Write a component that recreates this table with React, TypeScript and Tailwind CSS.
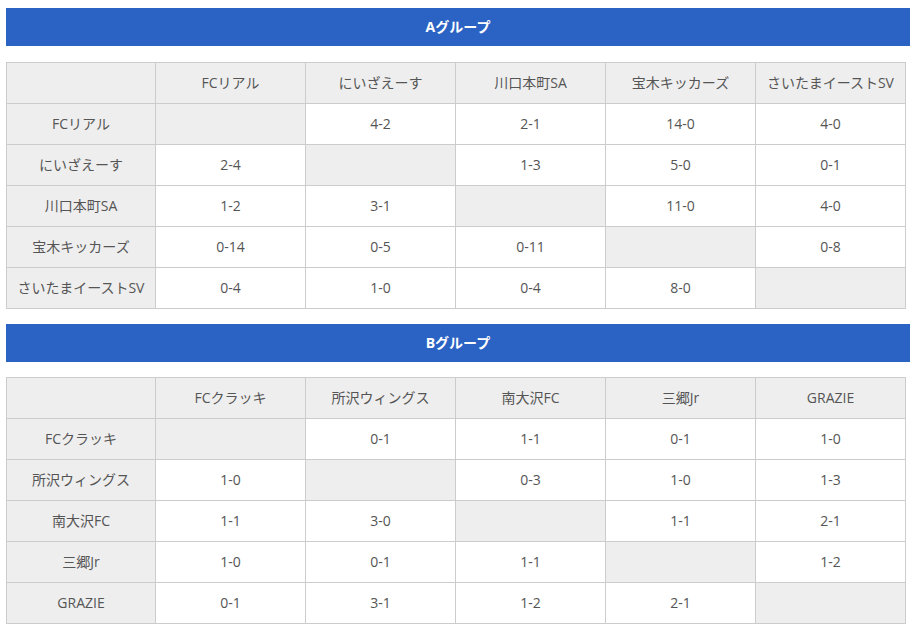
import React from "react";

type Group = { title: string; teams: string[]; scores: (string | null)[][] };

const groups: Group[] = [
  {
    title: "Aグループ",
    teams: ["FCリアル", "にいざえーす", "川口本町SA", "宝木キッカーズ", "さいたまイーストSV"],
    scores: [
      [null, "4-2", "2-1", "14-0", "4-0"],
      ["2-4", null, "1-3", "5-0", "0-1"],
      ["1-2", "3-1", null, "11-0", "4-0"],
      ["0-14", "0-5", "0-11", null, "0-8"],
      ["0-4", "1-0", "0-4", "8-0", null],
    ],
  },
  {
    title: "Bグループ",
    teams: ["FCクラッキ", "所沢ウィングス", "南大沢FC", "三郷Jr", "GRAZIE"],
    scores: [
      [null, "0-1", "1-1", "0-1", "1-0"],
      ["1-0", null, "0-3", "1-0", "1-3"],
      ["1-1", "3-0", null, "1-1", "2-1"],
      ["1-0", "0-1", "1-1", null, "1-2"],
      ["0-1", "3-1", "1-2", "2-1", null],
    ],
  },
];

function Cell({ gray, children }: { gray?: boolean; children?: React.ReactNode }) {
  return (
    <div
      className={
        "h-[41px] pb-[2px] border-r border-b border-[#cccccc] flex items-center justify-center whitespace-nowrap " +
        (gray ? "bg-[#eeeeee]" : "bg-white")
      }
    >
      {children}
    </div>
  );
}

function GroupTable({ g, first }: { g: Group; first: boolean }) {
  return (
    <div className={first ? "pt-2" : "pt-[15px]"}>
      <div className="h-[38px] pb-[2px] bg-[#2b63c4] text-white font-bold text-[14px] flex items-center justify-center">
        {g.title}
      </div>
      <div
        className={
          (first ? "mt-4" : "mt-[15px]") +
          " w-[900px] grid grid-cols-[149px_150px_150px_150px_150px_150px] border-l border-t border-[#cccccc] text-[14px] text-[#555555]"
        }
      >
        <Cell gray />
        {g.teams.map((t) => (
          <Cell key={"h" + t} gray>
            {t}
          </Cell>
        ))}
        {g.teams.map((t, i) => (
          <React.Fragment key={t}>
            <Cell gray>{t}</Cell>
            {g.scores[i].map((s, j) => (
              <Cell key={j} gray={s === null}>
                {s}
              </Cell>
            ))}
          </React.Fragment>
        ))}
      </div>
    </div>
  );
}

export default function App() {
  return (
    <div
      className="bg-white w-[916px] h-[634px] px-[6px] overflow-hidden"
      style={{ fontFamily: '"Open Sans", "Noto Sans CJK JP", sans-serif' }}
    >
      {groups.map((g, i) => (
        <GroupTable key={g.title} g={g} first={i === 0} />
      ))}
    </div>
  );
}
